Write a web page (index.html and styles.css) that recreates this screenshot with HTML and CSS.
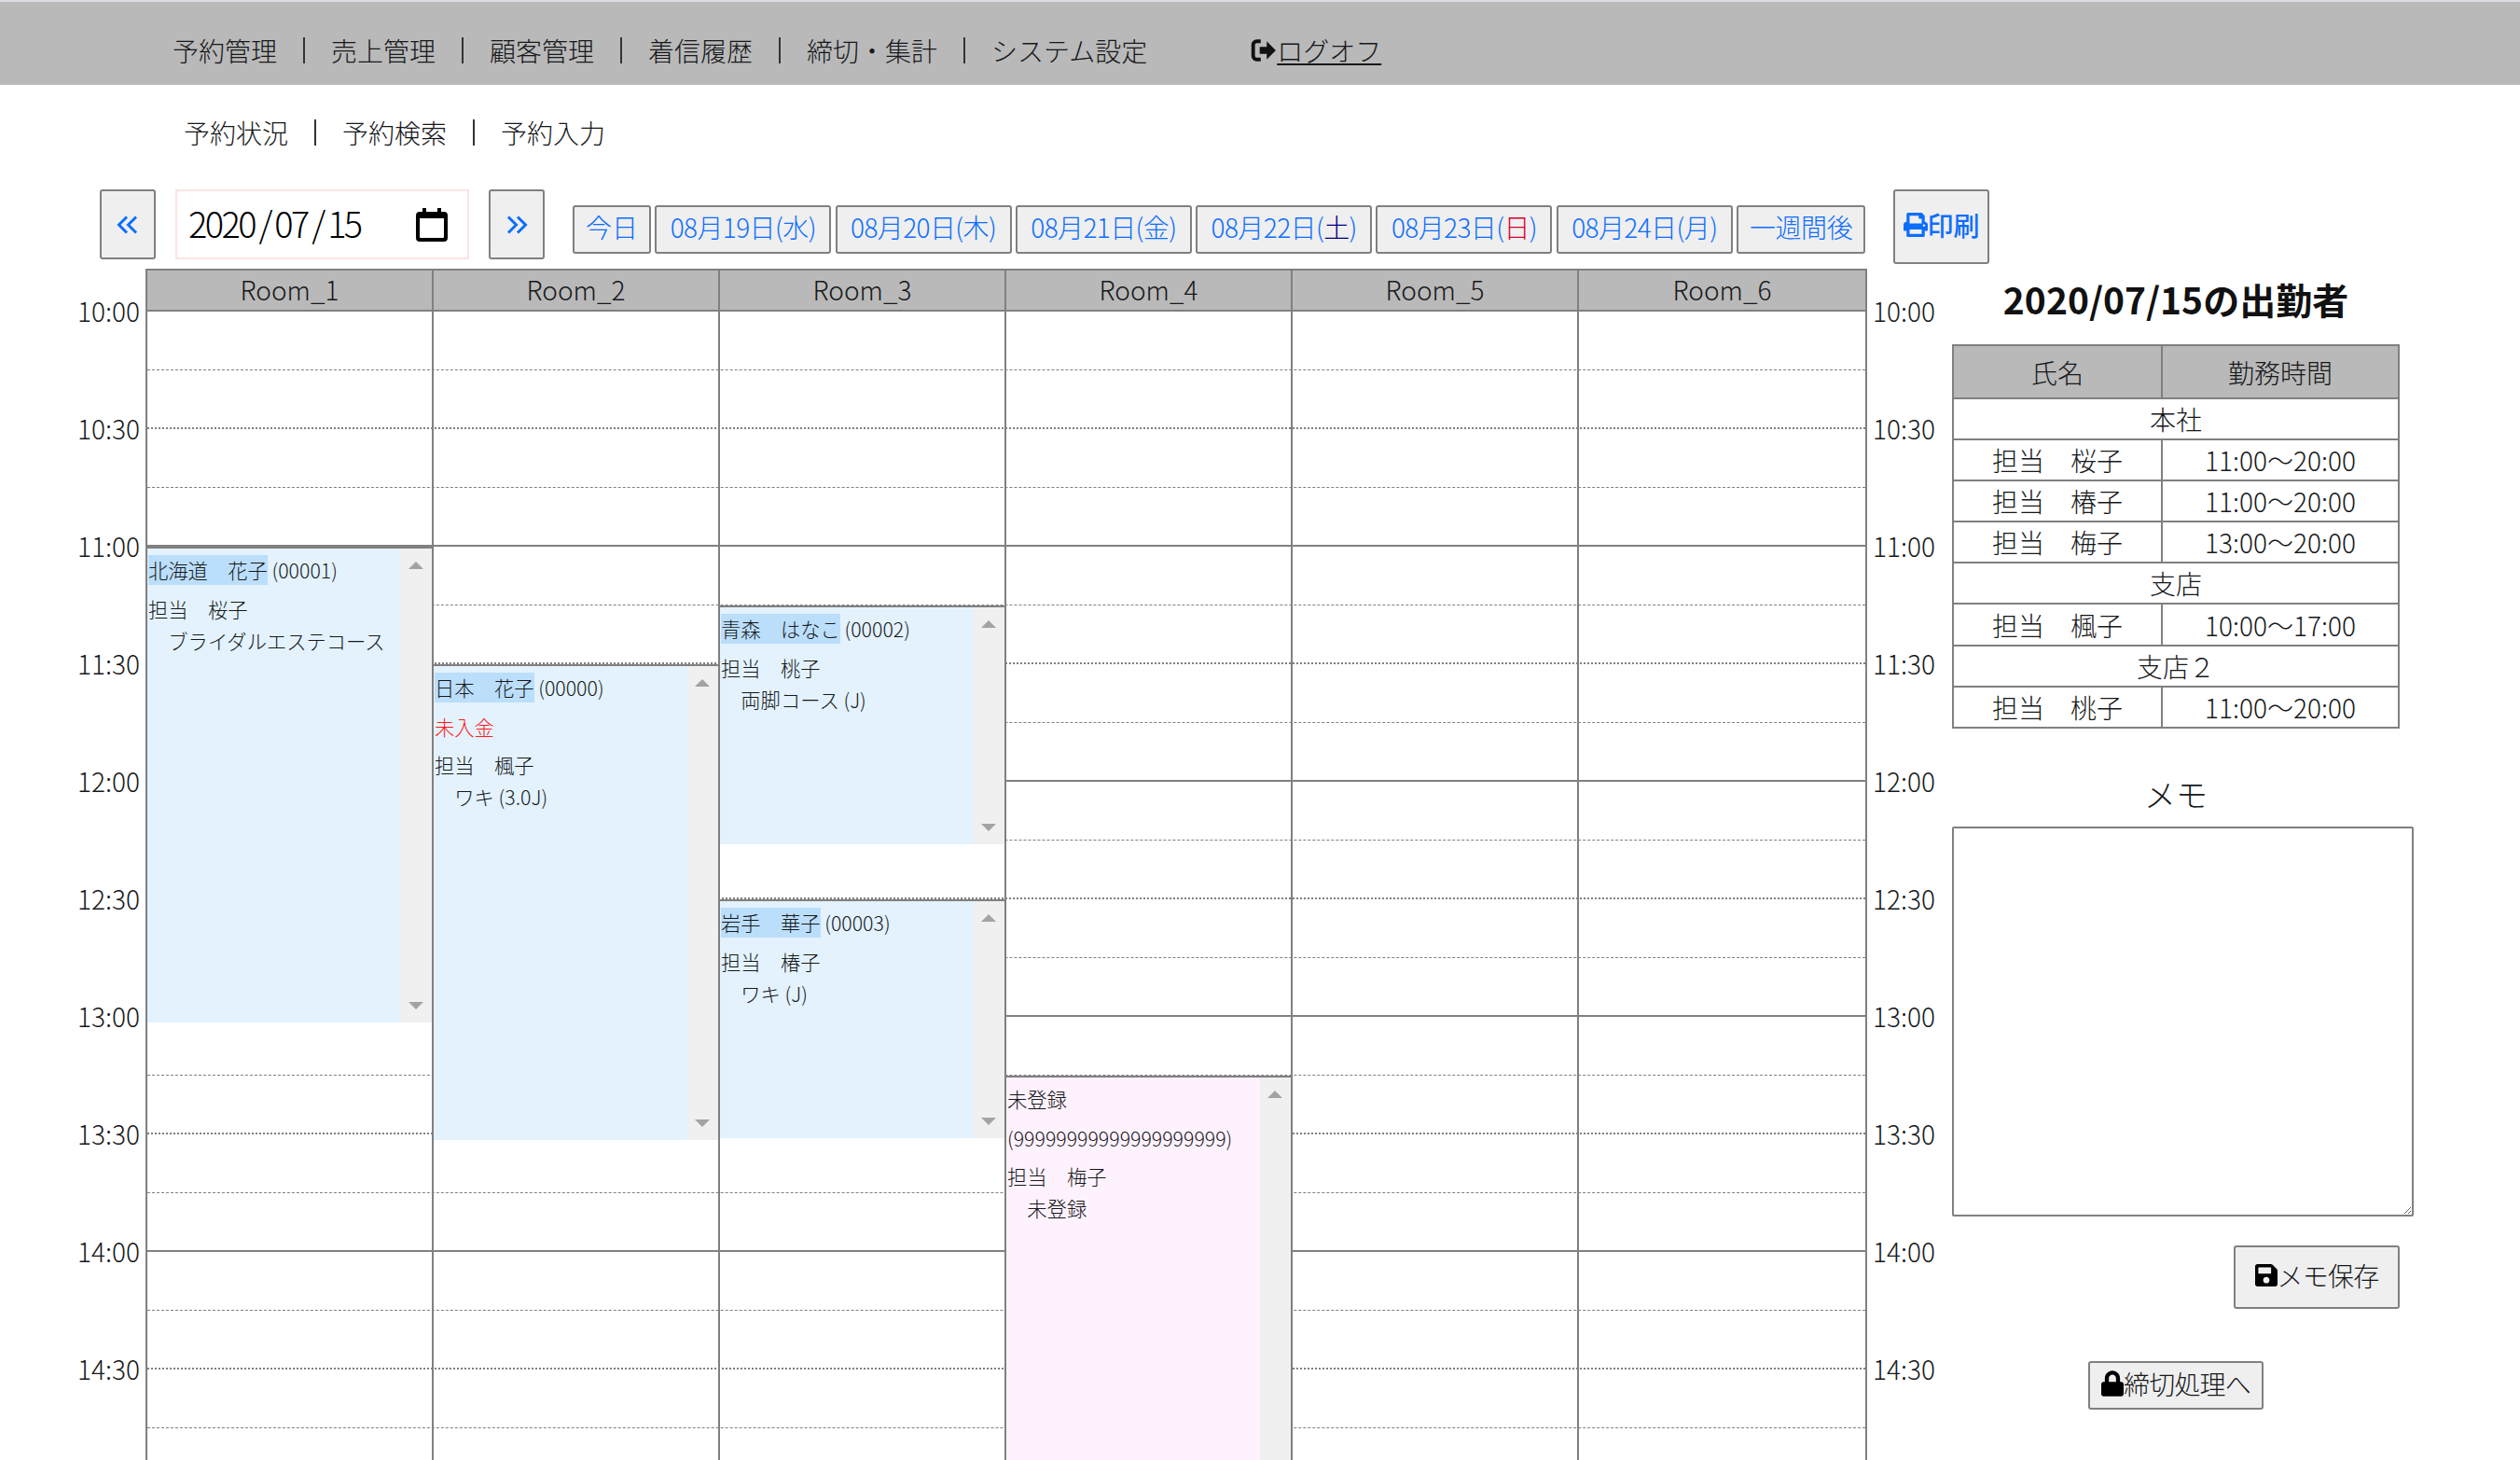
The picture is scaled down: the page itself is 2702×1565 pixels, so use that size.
FILE: index.html
```html
<!DOCTYPE html>
<html lang="ja">
<head>
    <meta charset="UTF-8">
    <title>予約状況</title>
    <link rel="stylesheet" href="styles.css">
</head>
<body>
    <nav class="topnav">
        <a class="nav-item" href="#">予約管理</a>
        <a class="nav-item" href="#">売上管理</a>
        <a class="nav-item" href="#">顧客管理</a>
        <a class="nav-item" href="#">着信履歴</a>
        <a class="nav-item" href="#">締切・集計</a>
        <a class="nav-item last" href="#">システム設定</a>
        <span class="logoff">
            <svg class="icon-logoff" viewBox="0 0 26 24"><path d="M10 3H6a3.500 3.500 0 0 0-3.500 3.500v11A3.500 3.500 0 0 0 6 21h4" fill="none" stroke="#111" stroke-width="3.600"/><path d="M9 8.500h7V3l9 9-9 9v-5.500H9z" fill="#111"/></svg><a href="#">ログオフ</a>
        </span>
    </nav>

    <nav class="subnav">
        <a class="nav-item" href="#">予約状況</a>
        <a class="nav-item" href="#">予約検索</a>
        <a class="nav-item last" href="#">予約入力</a>
    </nav>

    <div class="toolbar">
        <button class="btn btn-arrow" type="button">
            <svg class="icon-angle" viewBox="0 0 24 20"><path d="M11 1.500 2.500 10l8.500 8.500M21 1.500 12.500 10l8.500 8.500" fill="none" stroke="#0d6efd" stroke-width="3"/></svg>
        </button>
        <div class="date-box">
            <span class="date-text">2020<i>/</i>07<i>/</i>15</span>
            <svg class="icon-cal" viewBox="0 0 34 36"><path d="M7 0h4v4h12V0h4v4h3a4 4 0 0 1 4 4v24a4 4 0 0 1-4 4H4a4 4 0 0 1-4-4V8a4 4 0 0 1 4-4h3zM4 11v20a1 1 0 0 0 1 1h24a1 1 0 0 0 1-1V11z" fill="#000"/></svg>
        </div>
        <button class="btn btn-arrow" type="button">
            <svg class="icon-angle" viewBox="0 0 24 20"><path d="M3 1.500 11.500 10 3 18.500M13 1.500 21.500 10 13 18.500" fill="none" stroke="#0d6efd" stroke-width="3"/></svg>
        </button>
        <div class="days">
            <button class="btn btn-day today" type="button">今日</button>
            <button class="btn btn-day" type="button">08月19日(水)</button>
            <button class="btn btn-day" type="button">08月20日(木)</button>
            <button class="btn btn-day" type="button">08月21日(金)</button>
            <button class="btn btn-day" type="button">08月22日(<span class="sat">土</span>)</button>
            <button class="btn btn-day" type="button">08月23日(<span class="sun">日</span>)</button>
            <button class="btn btn-day" type="button">08月24日(月)</button>
            <button class="btn btn-day next-week" type="button">一週間後</button>
        </div>
        <button class="btn btn-print" type="button">
            <svg class="icon-print" viewBox="0 0 512 512"><path d="M448 192V77.250c0-8.490-3.370-16.620-9.370-22.630L393.370 9.370c-6-6-14.140-9.370-22.630-9.370H96C78.330 0 64 14.330 64 32v160c-35.350 0-64 28.650-64 64v112c0 8.840 7.160 16 16 16h48v96c0 17.670 14.330 32 32 32h320c17.670 0 32-14.330 32-32v-96h48c8.840 0 16-7.160 16-16V256c0-35.350-28.650-64-64-64zm-64 256H128v-96h256v96zm0-224H128V64h192v48c0 8.840 7.160 16 16 16h48v96zm48 72c-13.250 0-24-10.750-24-24 0-13.260 10.750-24 24-24s24 10.740 24 24c0 13.250-10.750 24-24 24z" fill="#0d6efd"/></svg>印刷
        </button>
    </div>

    <div class="main">
        <div class="times times-left">
            <div class="time">10:00</div><div class="time">10:30</div><div class="time">11:00</div><div class="time">11:30</div><div class="time">12:00</div><div class="time">12:30</div><div class="time">13:00</div><div class="time">13:30</div><div class="time">14:00</div><div class="time">14:30</div>
        </div>

        <div class="board">
            <div class="board-head">
                <div class="room-name">Room_1</div>
                <div class="room-name">Room_2</div>
                <div class="room-name">Room_3</div>
                <div class="room-name">Room_4</div>
                <div class="room-name">Room_5</div>
                <div class="room-name">Room_6</div>
            </div>
            <div class="board-body">
                <div class="slot q"></div><div class="slot half"></div><div class="slot q"></div><div class="slot hour"></div>
                <div class="slot q"></div><div class="slot half"></div><div class="slot q"></div><div class="slot hour"></div>
                <div class="slot q"></div><div class="slot half"></div><div class="slot q"></div><div class="slot hour"></div>
                <div class="slot q"></div><div class="slot half"></div><div class="slot q"></div><div class="slot hour"></div>
                <div class="slot q"></div><div class="slot half"></div><div class="slot q"></div><div class="slot hour"></div>

                <div class="rooms">
                    <div class="room">
                        <div class="event" style="top:252px;height:510px">
                            <div class="event-body">
                                <p class="line"><span class="guest">北海道　花子</span> (00001)</p>
                                <p class="line tight">担当　桜子</p>
                                <p class="line">　ブライダルエステコース</p>
                            </div>
                            <div class="event-bar"></div>
                        </div>
                    </div>
                    <div class="room">
                        <div class="event" style="top:378px;height:510px">
                            <div class="event-body">
                                <p class="line"><span class="guest">日本　花子</span> (00000)</p>
                                <p class="line unpaid">未入金</p>
                                <p class="line tight">担当　楓子</p>
                                <p class="line">　ワキ (3.0J)</p>
                            </div>
                            <div class="event-bar"></div>
                        </div>
                    </div>
                    <div class="room">
                        <div class="event" style="top:315px;height:256px">
                            <div class="event-body">
                                <p class="line"><span class="guest">青森　はなこ</span> (00002)</p>
                                <p class="line tight">担当　桃子</p>
                                <p class="line">　両脚コース (J)</p>
                            </div>
                            <div class="event-bar"></div>
                        </div>
                        <div class="event" style="top:630px;height:256px">
                            <div class="event-body">
                                <p class="line"><span class="guest">岩手　華子</span> (00003)</p>
                                <p class="line tight">担当　椿子</p>
                                <p class="line">　ワキ (J)</p>
                            </div>
                            <div class="event-bar"></div>
                        </div>
                    </div>
                    <div class="room">
                        <div class="event unregistered" style="top:819px;height:510px">
                            <div class="event-body">
                                <p class="line">未登録</p>
                                <p class="line">(99999999999999999999)</p>
                                <p class="line tight">担当　梅子</p>
                                <p class="line">　未登録</p>
                            </div>
                            <div class="event-bar"></div>
                        </div>
                    </div>
                    <div class="room"></div>
                    <div class="room"></div>
                </div>
            </div>
        </div>

        <div class="times times-right">
            <div class="time">10:00</div><div class="time">10:30</div><div class="time">11:00</div><div class="time">11:30</div><div class="time">12:00</div><div class="time">12:30</div><div class="time">13:00</div><div class="time">13:30</div><div class="time">14:00</div><div class="time">14:30</div>
        </div>

        <aside class="side">
            <h2 class="side-title">2020/07/15の出勤者</h2>
            <table class="staff">
                <thead>
                    <tr><th class="col-name">氏名</th><th>勤務時間</th></tr>
                </thead>
                <tbody>
                    <tr><td colspan="2">本社</td></tr>
                    <tr><td>担当　桜子</td><td>11:00～20:00</td></tr>
                    <tr><td>担当　椿子</td><td>11:00～20:00</td></tr>
                    <tr><td>担当　梅子</td><td>13:00～20:00</td></tr>
                    <tr><td colspan="2">支店</td></tr>
                    <tr><td>担当　楓子</td><td>10:00～17:00</td></tr>
                    <tr><td colspan="2">支店２</td></tr>
                    <tr><td>担当　桃子</td><td>11:00～20:00</td></tr>
                </tbody>
            </table>

            <h3 class="memo-title">メモ</h3>
            <textarea class="memo"></textarea>
            <div class="memo-actions">
                <button class="btn btn-save" type="button">
                    <svg class="icon-btn" viewBox="0 0 448 512"><path d="M433.941 129.941l-83.882-83.882A48 48 0 0 0 316.118 32H48C21.490 32 0 53.490 0 80v352c0 26.510 21.490 48 48 48h352c26.510 0 48-21.490 48-48V163.882a48 48 0 0 0-14.059-33.941zM224 416c-35.346 0-64-28.654-64-64 0-35.346 28.654-64 64-64s64 28.654 64 64c0 35.346-28.654 64-64 64zm96-304.520V212c0 6.627-5.373 12-12 12H76c-6.627 0-12-5.373-12-12V108c0-6.627 5.373-12 12-12h228.520c3.183 0 6.235 1.264 8.485 3.515l3.480 3.480A11.996 11.996 0 0 1 320 111.480z" fill="#000"/></svg>メモ保存
                </button>
            </div>
            <div class="close-actions">
                <button class="btn btn-close" type="button">
                    <svg class="icon-btn" viewBox="0 0 448 512"><path d="M400 224h-24v-72C376 68.200 307.800 0 224 0S72 68.200 72 152v72H48c-26.500 0-48 21.500-48 48v192c0 26.500 21.500 48 48 48h352c26.500 0 48-21.500 48-48V272c0-26.500-21.500-48-48-48zm-104 0H152v-72c0-39.700 32.300-72 72-72s72 32.300 72 72v72z" fill="#000"/></svg>締切処理へ
                </button>
            </div>
        </aside>
    </div>
</body>
</html>
```

FILE: styles.css
```css
html, body {
    height: 100%;
}
body {
    margin: 0;
    overflow: hidden;
    background: #fff;
    color: #16181a;
    font-family: "Noto Sans CJK JP", "Noto Sans", sans-serif;
    font-size: 28px;
    font-weight: 300;
    line-height: 1;
}
a {
    color: inherit;
    text-decoration: none;
}

/* top menus */
.topnav {
    display: flex;
    align-items: center;
    box-sizing: border-box;
    height: 91px;
    padding: 15px 0 0 185px;
    background: #b9b9b9;
    border-top: 2px solid #dcdce2;
}
.subnav {
    display: flex;
    align-items: center;
    margin-top: 37px;
    margin-bottom: 47px;
    padding-left: 197px;
}
.nav-item {
    padding-right: 28px;
    margin-right: 28px;
    border-right: 2px solid #333;
    height: 28px;
    line-height: 28px;
}
.nav-item.last {
    border-right: none;
    padding-right: 0;
    margin-right: 0;
}
.logoff {
    display: flex;
    align-items: center;
    margin-left: 111px;
}
.logoff a {
    text-decoration: underline;
}
.icon-logoff {
    width: 28px;
    height: 26px;
}

/* toolbar */
.toolbar {
    display: flex;
    align-items: flex-start;
    height: 85px;
    padding-left: 107px;
}
.btn {
    display: inline-flex;
    align-items: center;
    justify-content: center;
    padding: 0;
    background: #efefef;
    border: 2px solid #808080;
    border-radius: 3px;
    color: #16181a;
    font-family: inherit;
    font-size: 28px;
    font-weight: 300;
}
.btn-arrow {
    width: 60px;
    height: 75px;
}
.icon-angle {
    width: 24px;
    height: 20px;
}
.date-box {
    display: flex;
    align-items: center;
    justify-content: space-between;
    box-sizing: border-box;
    width: 315px;
    height: 75px;
    margin: 0 21px;
    padding: 0 21px 0 12px;
    border: 2px solid #fde3e3;
}
.date-text {
    margin-bottom: 4px;
    color: #000;
    font-size: 38px;
    font-weight: 300;
    letter-spacing: -2.600px;
}
.date-text i {
    font-style: normal;
    padding: 0 4.500px;
}
.icon-cal {
    width: 34px;
    height: 36px;
}
.days {
    display: flex;
    gap: 4.300px;
    margin: 17px 30px 0 30px;
}
.btn-day {
    width: 189px;
    height: 52px;
    padding-bottom: 6px;
    color: #0d6efd;
    letter-spacing: -0.600px;
}
.today {
    width: 84px;
    letter-spacing: 0;
}
.next-week {
    width: 138px;
    letter-spacing: -0.400px;
}
.sat {
    color: #000080;
}
.sun {
    color: #d9002f;
}
.btn-print {
    width: 103px;
    height: 80px;
    padding-bottom: 5px;
    color: #0d6efd;
    font-weight: 500;
}
.icon-print {
    width: 26px;
    height: 26px;
}

/* schedule */
.main {
    display: flex;
    align-items: flex-start;
}
.times {
    padding-top: 45px;
}
.times-left {
    width: 156px;
    text-align: right;
    padding-right: 6px;
    box-sizing: border-box;
}
.times-right {
    width: 91px;
    padding-left: 6px;
    box-sizing: border-box;
}
.time {
    height: 126px;
    line-height: 0;
}
.board {
    width: 1846px;
    box-sizing: border-box;
    border-left: 2px solid #808080;
    border-right: 2px solid #808080;
    border-top: 2px solid #808080;
}
.board-head {
    display: grid;
    grid-template-columns: repeat(6, 1fr);
    height: 42px;
    background: #b9b9b9;
    border-bottom: 2px solid #808080;
}
.room-name {
    line-height: 40px;
    text-align: center;
    border-right: 2px solid #808080;
}
.room-name:last-child {
    border-right: none;
}
.board-body {
    position: relative;
}
.slot {
    box-sizing: border-box;
    height: 63px;
}
.slot.q {
    border-bottom: 1px dashed #808080;
}
.slot.half {
    border-bottom: 2px dotted #808080;
}
.slot.hour {
    border-bottom: 2px solid #808080;
}
.rooms {
    position: absolute;
    top: 0;
    right: 0;
    bottom: 0;
    left: 0;
    display: grid;
    grid-template-columns: repeat(6, 1fr);
}
.room {
    position: relative;
    border-right: 2px solid #808080;
}
.room:last-child {
    border-right: none;
}
.event {
    position: absolute;
    left: 0;
    right: 0;
    display: flex;
    box-sizing: border-box;
    background: #e3f2fd;
    border-top: 2px solid #808080;
    font-size: 21.300px;
}
.event.unregistered {
    background: #fef2ff;
}
.event-body {
    flex: 1;
    padding: 7px 0 0 1px;
}
.event-bar {
    display: flex;
    flex-direction: column;
    justify-content: space-between;
    box-sizing: border-box;
    width: 33px;
    padding: 14px 8px;
    background: #f0f0f0;
}
.event-bar::before,
.event-bar::after {
    content: "";
    width: 0;
    height: 0;
    border-left: 8px solid transparent;
    border-right: 8px solid transparent;
}
.event-bar::before {
    border-bottom: 8px solid #a3a3a3;
}
.event-bar::after {
    border-top: 8px solid #a3a3a3;
}
.line {
    margin: 0 0 9.500px;
    line-height: 32px;
    white-space: nowrap;
}
.line.tight {
    margin-bottom: 2px;
}
.guest {
    display: inline-block;
    background: #bbdefb;
}
.unpaid {
    color: #ff1a1a;
}

/* right side */
.side {
    width: 495px;
}
.side-title {
    width: 480px;
    margin: 0 0 13px;
    height: 68px;
    line-height: 65px;
    font-size: 39px;
    font-weight: 700;
    text-align: center;
    color: #111;
}
.staff {
    width: 480px;
    table-layout: fixed;
    border-collapse: collapse;
}
.staff th,
.staff td {
    height: 42.100px;
    padding: 0;
    border: 2px solid #808080;
    text-align: center;
    font-weight: 300;
}
.staff th {
    height: 55px;
    background: #b9b9b9;
}
.col-name {
    width: 222px;
}
.memo-title {
    width: 480px;
    margin: 47px 0 8px;
    height: 50px;
    line-height: 46px;
    font-size: 34px;
    font-weight: 300;
    text-align: center;
}
.memo {
    display: block;
    box-sizing: border-box;
    width: 495px;
    height: 418px;
    border: 2px solid #808080;
    border-radius: 2px;
}
.memo-actions {
    display: flex;
    justify-content: flex-end;
    width: 480px;
    margin-top: 31px;
}
.close-actions {
    display: flex;
    justify-content: center;
    width: 480px;
    margin-top: 56px;
}
.btn-save {
    width: 178px;
    height: 68px;
    padding-bottom: 3px;
    letter-spacing: -0.800px;
}
.btn-close {
    width: 188px;
    height: 52px;
    padding-bottom: 3px;
    letter-spacing: -0.800px;
}
.icon-btn {
    width: 24px;
    height: 28px;
}
```
